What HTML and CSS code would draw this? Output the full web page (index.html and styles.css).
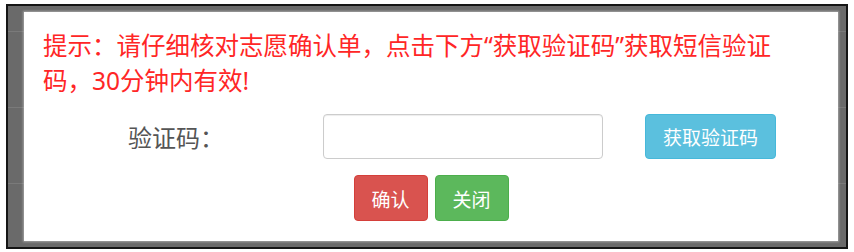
FILE: index.html
```html
<!DOCTYPE html>
<html lang="zh-CN">
<head>
<meta charset="utf-8">
<title>验证码确认</title>
<link rel="stylesheet" href="styles.css">
</head>
<body>
<div class="frame">
  <div class="dialog">
    <p class="tip">提示：请仔细核对志愿确认单，点击下方“获取验证码”获取短信验证<br>码，30分钟内有效!</p>
    <div class="row">
      <label class="label" for="code">验证码：</label>
      <input class="input" id="code" type="text">
      <button class="btn btn-info" type="button">获取验证码</button>
    </div>
    <div class="actions">
      <button class="btn btn-danger" type="button">确认</button>
      <button class="btn btn-success" type="button">关闭</button>
    </div>
  </div>
</div>
</body>
</html>
```

FILE: styles.css
```css
html, body {
  margin: 0;
  padding: 0;
  background: #ffffff;
  font-family: "Noto Sans CJK SC", "Noto Sans", sans-serif;
}

.frame {
  box-sizing: border-box;
  margin: 4px 0 0 6px;
  width: 842px;
  height: 245px;
  border: 2px solid #151515;
  padding: 6px 8px 6px 16px;
  background-color: #6a6a6a;
  background-image:
    linear-gradient(#7a7a7a, #7a7a7a),
    linear-gradient(#7a7a7a, #7a7a7a),
    linear-gradient(#7a7a7a, #7a7a7a);
  background-repeat: no-repeat;
  background-size: 100% 1px, 100% 1px, 100% 1px;
  background-position: 0 25px, 0 101px, 0 177px;
}

.dialog {
  box-sizing: border-box;
  width: 814px;
  height: 229px;
  background: #ffffff;
  padding: 16px 19px 0 19px;
  box-shadow: 0 0 2px 1px rgba(200, 200, 200, 0.6);
}

.tip {
  margin: 0;
  color: #ff2626;
  font-family: "Noto Sans", "Noto Sans CJK SC", sans-serif;
  font-size: 24.5px;
  line-height: 35px;
  white-space: nowrap;
}

.row {
  display: flex;
  align-items: center;
  margin: 16px 0 0 85px;
  height: 45px;
}

.label {
  width: 195px;
  color: #555555;
  font-size: 24px;
  line-height: 45px;
}

.input {
  box-sizing: border-box;
  width: 280px;
  height: 45px;
  margin: 0 42px 0 0;
  border: 1px solid #cccccc;
  border-radius: 4px;
  box-shadow: inset 0 1px 1px rgba(0, 0, 0, 0.075);
  background: #ffffff;
  padding: 6px 12px;
  font-size: 18px;
  outline: none;
}

.btn {
  box-sizing: border-box;
  border: 1px solid transparent;
  border-radius: 4px;
  color: #ffffff;
  font-family: "Noto Sans CJK SC", "Noto Sans", sans-serif;
  font-size: 19px;
  padding: 0;
  cursor: pointer;
}

.btn-info {
  width: 131px;
  height: 45px;
  background: #5bc0de;
  border-color: #46b8da;
}

.actions {
  display: flex;
  justify-content: center;
  gap: 7px;
  margin-top: 16px;
}

.btn-danger,
.btn-success {
  width: 74px;
  height: 46px;
}

.btn-danger {
  background: #d9534f;
  border-color: #d43f3a;
}

.btn-success {
  background: #5cb85c;
  border-color: #4cae4c;
}
```
